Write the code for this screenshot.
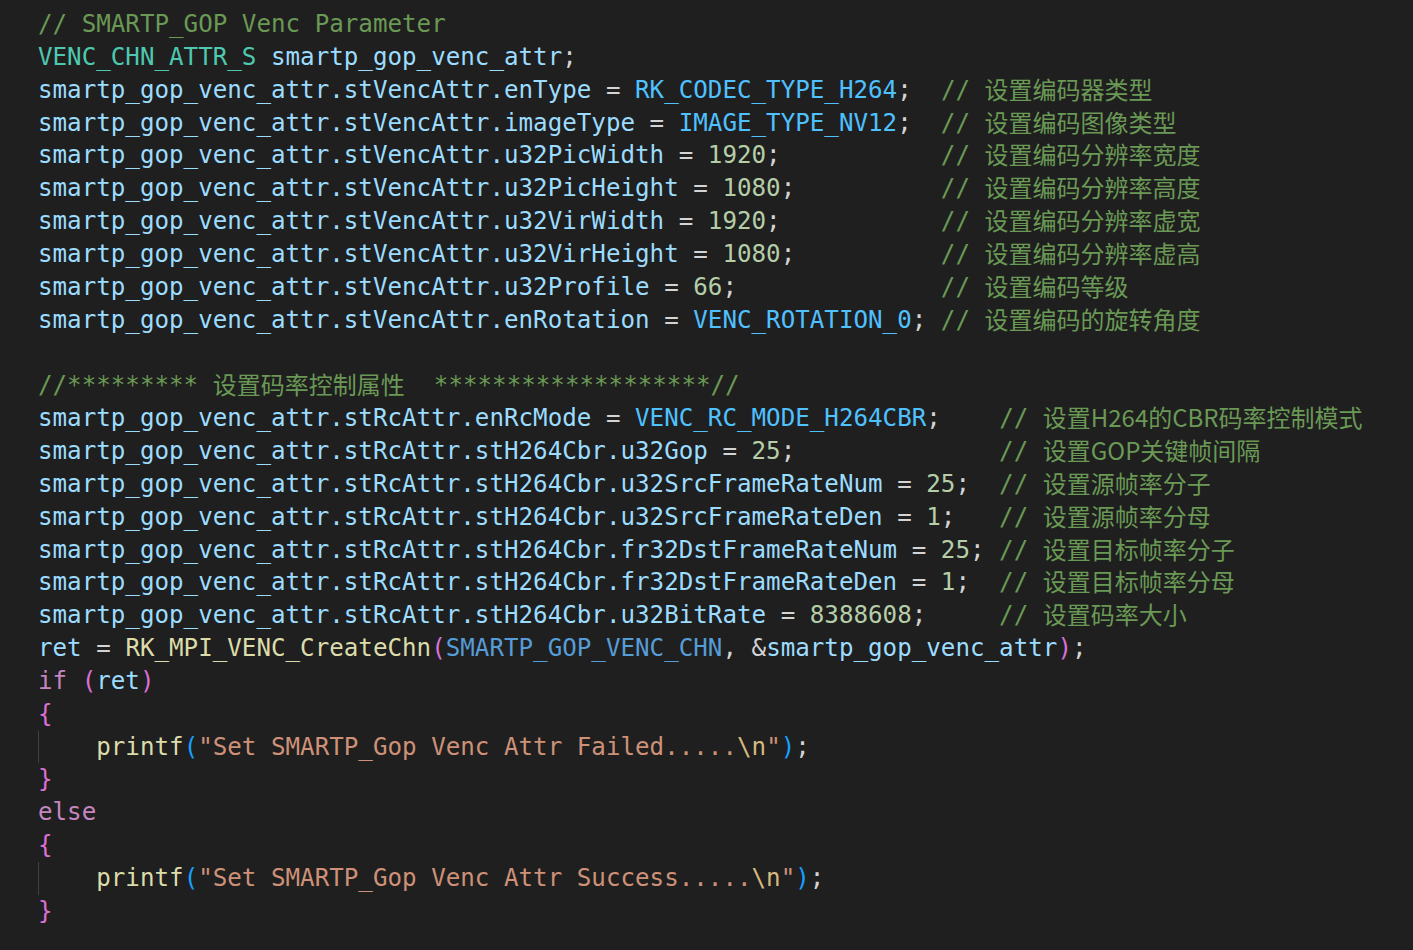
const C = {
  c: "text-[#6a9955]",
  t: "text-[#4ec9b0]",
  v: "text-[#9cdcfe]",
  e: "text-[#4fc1ff]",
  n: "text-[#b5cea8]",
  o: "text-[#d4d4d4]",
  f: "text-[#dcdcaa]",
  m: "text-[#569cd6]",
  s: "text-[#ce9178]",
  x: "text-[#d7ba7d]",
  k: "text-[#c586c0]",
  p1: "text-[#da70d6]",
  p2: "text-[#179fff]",
};

// columns where trailing comments start
const pad = (tokens, col) => {
  const len = tokens.reduce((a, t) => a + t[1].length, 0);
  return [...tokens, ["o", " ".repeat(Math.max(1, col - len))]];
};

const assign = (lhs, rhs, kind, note, col) =>
  [...pad([["v", lhs], ["o", " = "], [kind, rhs], ["o", ";"]], col), ["c", "// "], ["cjk", note]];

const venc = "smartp_gop_venc_attr.stVencAttr.";
const rc = "smartp_gop_venc_attr.stRcAttr.";

const lines = [
  [["c", "// SMARTP_GOP Venc Parameter"]],
  [["t", "VENC_CHN_ATTR_S"], ["o", " "], ["v", "smartp_gop_venc_attr"], ["o", ";"]],
  assign(venc + "enType", "RK_CODEC_TYPE_H264", "e", "设置编码器类型", 62),
  assign(venc + "imageType", "IMAGE_TYPE_NV12", "e", "设置编码图像类型", 62),
  assign(venc + "u32PicWidth", "1920", "n", "设置编码分辨率宽度", 62),
  assign(venc + "u32PicHeight", "1080", "n", "设置编码分辨率高度", 62),
  assign(venc + "u32VirWidth", "1920", "n", "设置编码分辨率虚宽", 62),
  assign(venc + "u32VirHeight", "1080", "n", "设置编码分辨率虚高", 62),
  assign(venc + "u32Profile", "66", "n", "设置编码等级", 62),
  assign(venc + "enRotation", "VENC_ROTATION_0", "e", "设置编码的旋转角度", 62),
  [],
  [["c", "//********* "], ["cjk", "设置码率控制属性"], ["c", "  *******************//"]],
  assign(rc + "enRcMode", "VENC_RC_MODE_H264CBR", "e", "设置H264的CBR码率控制模式", 66),
  assign(rc + "stH264Cbr.u32Gop", "25", "n", "设置GOP关键帧间隔", 66),
  assign(rc + "stH264Cbr.u32SrcFrameRateNum", "25", "n", "设置源帧率分子", 66),
  assign(rc + "stH264Cbr.u32SrcFrameRateDen", "1", "n", "设置源帧率分母", 66),
  assign(rc + "stH264Cbr.fr32DstFrameRateNum", "25", "n", "设置目标帧率分子", 66),
  assign(rc + "stH264Cbr.fr32DstFrameRateDen", "1", "n", "设置目标帧率分母", 66),
  assign(rc + "stH264Cbr.u32BitRate", "8388608", "n", "设置码率大小", 66),
  [["v", "ret"], ["o", " = "], ["f", "RK_MPI_VENC_CreateChn"], ["p1", "("], ["m", "SMARTP_GOP_VENC_CHN"], ["o", ", &"], ["v", "smartp_gop_venc_attr"], ["p1", ")"], ["o", ";"]],
  [["k", "if"], ["o", " "], ["p1", "("], ["v", "ret"], ["p1", ")"]],
  [["p1", "{"]],
  [["guide", "    "], ["f", "printf"], ["p2", "("], ["s", "\"Set SMARTP_Gop Venc Attr Failed....."], ["x", "\\n"], ["s", "\""], ["p2", ")"], ["o", ";"]],
  [["p1", "}"]],
  [["k", "else"]],
  [["p1", "{"]],
  [["guide", "    "], ["f", "printf"], ["p2", "("], ["s", "\"Set SMARTP_Gop Venc Attr Success....."], ["x", "\\n"], ["s", "\""], ["p2", ")"], ["o", ";"]],
  [["p1", "}"]],
];

function Token({ kind, text }) {
  if (kind === "cjk") {
    return (
      <span className="inline-block h-[32.85px] leading-[29px] align-top text-[#6a9955] text-[24px] font-['Noto_Sans_CJK_SC','Noto_Sans_CJK_JP',sans-serif]">
        {text}
      </span>
    );
  }
  if (kind === "guide") {
    return (
      <span className="inline-block h-[32.85px] align-top shadow-[inset_1px_0_0_#404040]">
        {text}
      </span>
    );
  }
  return <span className={C[kind]}>{text}</span>;
}

export default function App() {
  return (
    <div className="min-h-screen w-full bg-[#1f1f1f] pl-[38px] pt-[8px] font-['DejaVu_Sans_Mono','Noto_Sans_CJK_SC',monospace] text-[24.2px] overflow-hidden">
      {lines.map((tokens, i) => (
        <div key={i} className="h-[32.85px] leading-[32.85px] whitespace-pre">
          {tokens.map(([kind, text], j) => (
            <Token key={j} kind={kind} text={text} />
          ))}
        </div>
      ))}
    </div>
  );
}
